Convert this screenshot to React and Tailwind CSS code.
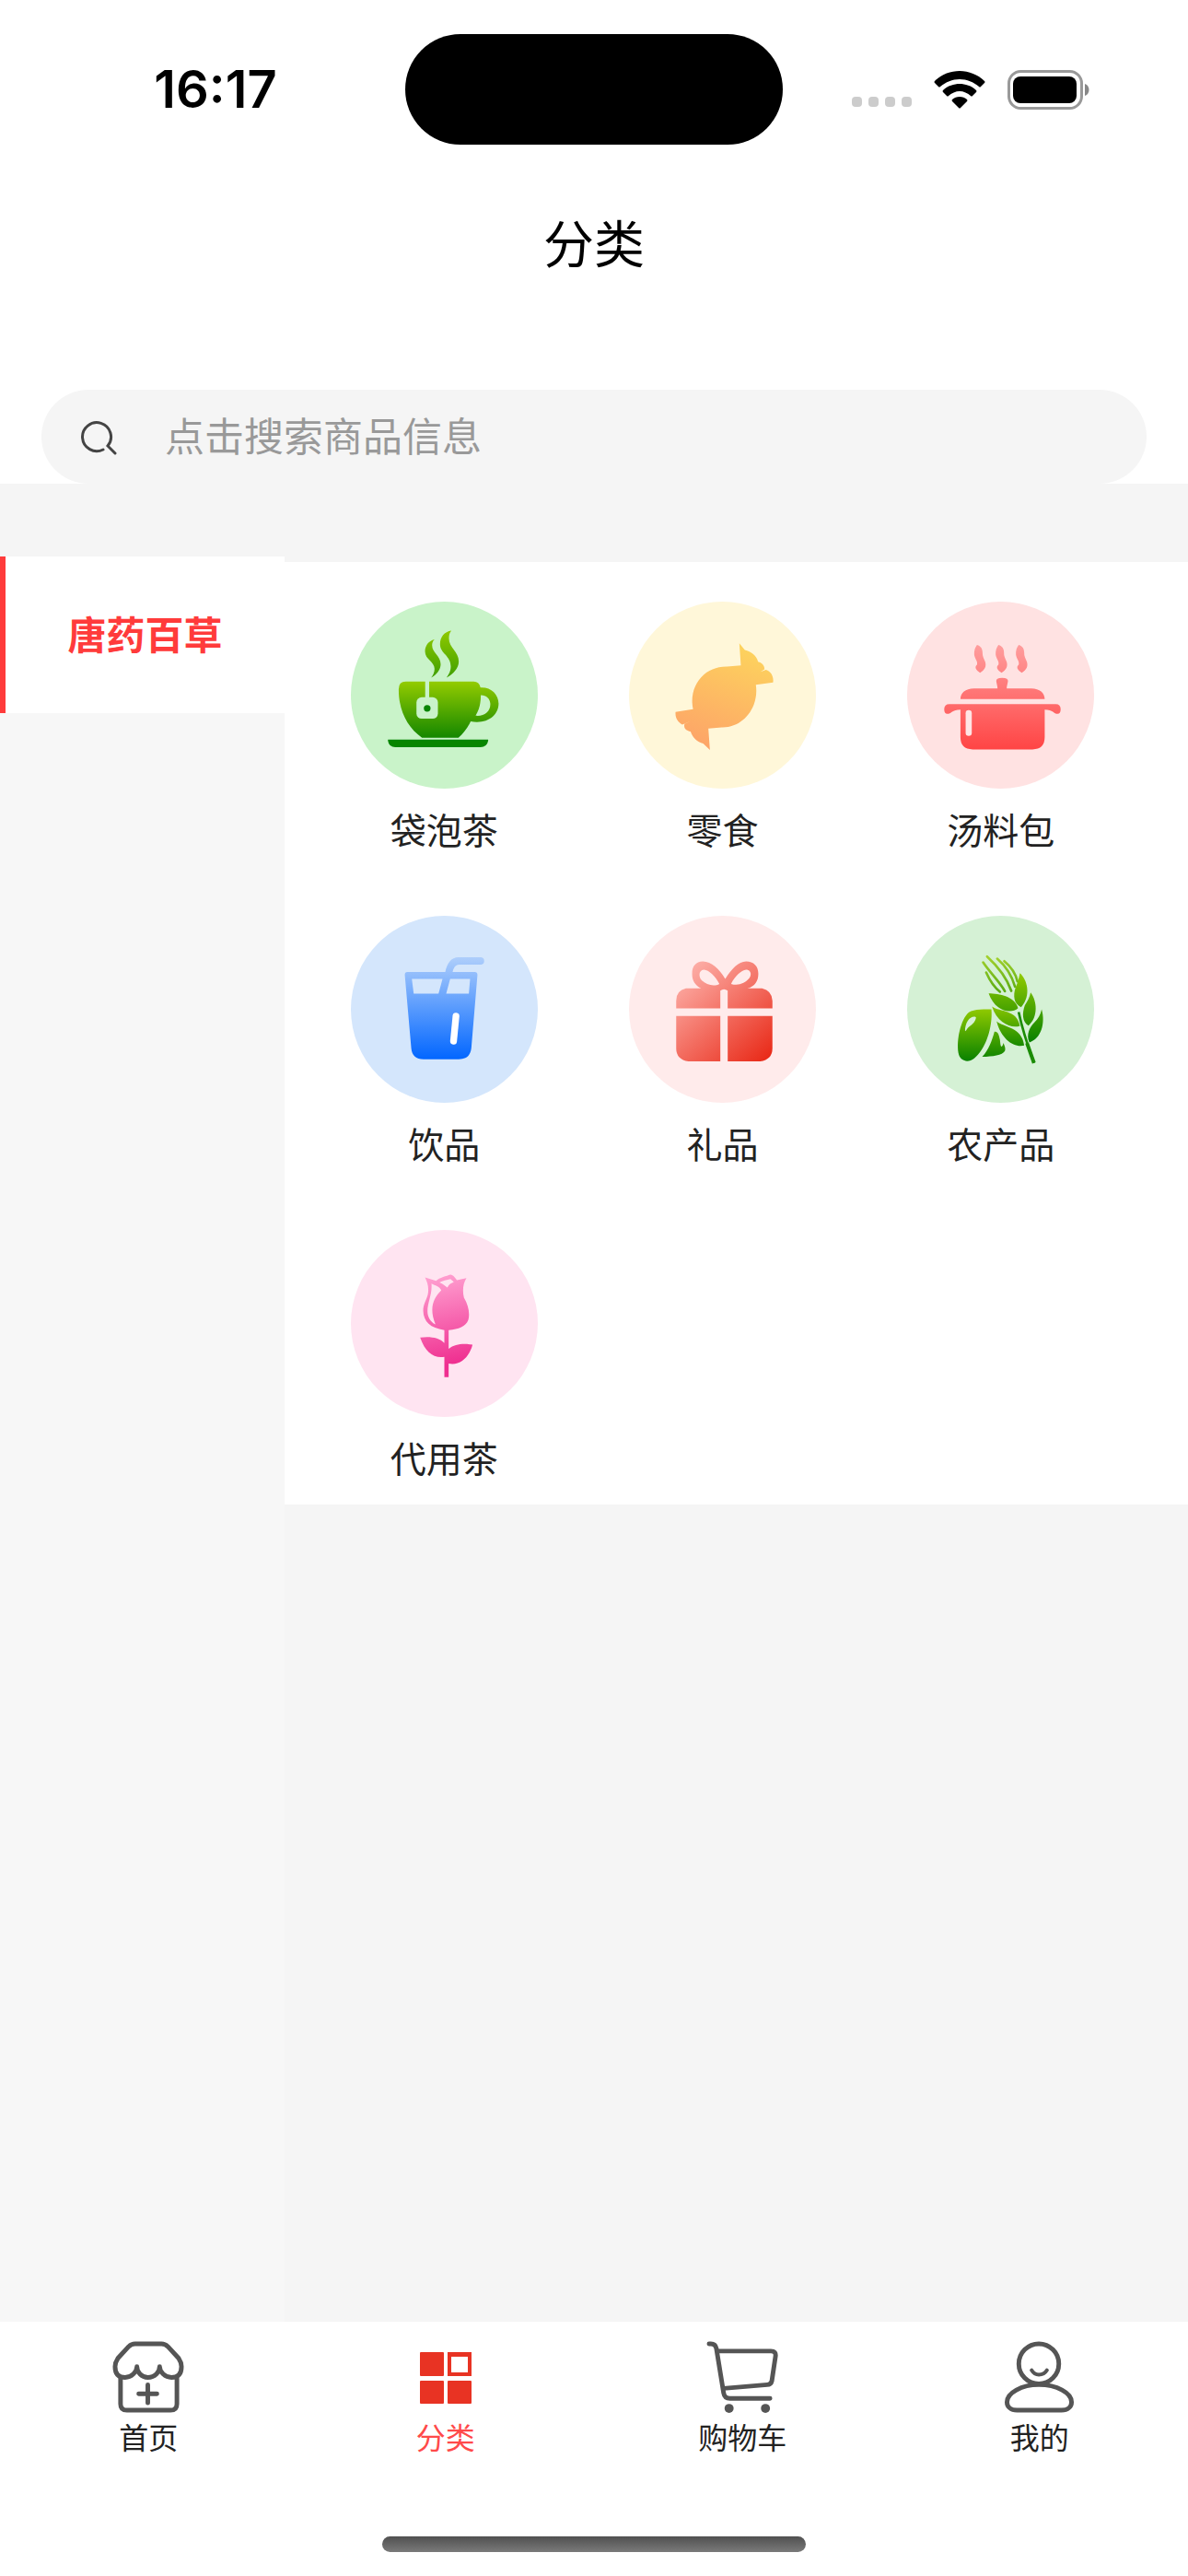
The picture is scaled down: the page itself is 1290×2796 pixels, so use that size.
import { useState } from "react";

function Grad({ id, from, to, x1 = 0, y1 = 0, x2 = 0, y2 = 1 }) {
  return (
    <linearGradient id={id} gradientUnits="userSpaceOnUse" x1={x1} y1={y1} x2={x2} y2={y2}>
      <stop offset="0" stopColor={from} />
      <stop offset="1" stopColor={to} />
    </linearGradient>
  );
}

function TeaIcon() {
  return (
    <svg viewBox="63 69 610 610" className="size-full" aria-hidden="true">
      <defs>
        <Grad id="tea-steam" from="#8fc900" to="#3f9f00" y1={165} y2={318} />
        <Grad id="tea-cup" from="#93cb00" to="#138600" y1={330} y2={515} />
      </defs>
      <path fill="url(#tea-steam)" d="M391 164C368 167 354 185 354 208C354 238 389 245 389 280C389 296 382 307 375 317C397 305 415 286 415 264C415 231 383 220 383 189C383 178 385 170 391 164Z" />
      <path fill="url(#tea-steam)" d="M336 192C316 197 305 213 305 231C305 258 336 264 336 288C336 299 331 309 325 317C343 307 356 290 356 273C356 246 328 236 328 211C328 203 331 197 336 192Z" />
      <path fill="url(#tea-cup)" fillRule="evenodd" d="M242 330H464Q481 330 486 349C520 347 545 371 545 402C545 441 507 470 454 460C443 482 430 499 414 513H295C247 478 219 425 219 355Q219 330 242 330ZM487 374C487 400 482 421 470 441C497 444 518 428 518 404C518 387 506 374 487 374Z" />
      <path stroke="#c9f3c9" strokeWidth="13" d="M312 326V386" />
      <rect x="277" y="381" width="70" height="70" rx="17" fill="#c9f3c9" />
      <circle cx="312" cy="417" r="11" fill="#078500" />
      <path fill="#078500" d="M184 519H511V523Q507 544 486 544H208Q187 544 184 523Z" />
    </svg>
  );
}

function CandyIcon() {
  return (
    <svg viewBox="69 69 610 610" className="size-full" aria-hidden="true">
      <defs>
        <Grad id="candy" from="#fdd45d" to="#fda468" x1={460} y1={210} x2={330} y2={550} />
      </defs>
      <path fill="url(#candy)" d="M429 205L447 227C467 231 486 246 490 265C503 268 512 278 511 290L498 298L516 291C533 296 542 314 539 333L483 340C494 413 442 481 372 479L328 483L333 553L311 532C292 528 277 513 270 493C254 489 247 482 250 468L270 459L243 470C228 462 219 448 221 429L278 420C262 343 316 279 389 281L434 277Z" />
    </svg>
  );
}

function PotIcon() {
  const steam = "M303 210C297 218 293 228 294 242C296 257 307 264 303 275C294 283 299 292 313 301C329 292 334 280 330 266C326 254 320 247 321 234C321 223 316 214 303 210Z";
  return (
    <svg viewBox="75 69 610 610" className="size-full" aria-hidden="true">
      <defs>
        <Grad id="pot" from="#ff9d9d" to="#ff4545" y1={210} y2={550} />
      </defs>
      <g fill="url(#pot)">
        <path d={steam} />
        <path d={steam} transform="translate(70 0)" />
        <path d={steam} transform="translate(136 0)" />
        <path d="M366 330Q364 318 385 318Q406 318 404 330C402 341 400 345 400 352H480C508 352 524 367 524 387H249C249 367 265 352 293 352H370C370 345 368 341 366 330Z" />
        <path d="M213 403H560Q576 403 576 420Q576 435 566 435C554 435 551 421 524 421V511Q524 551 484 551H289Q249 551 249 511V421C222 421 219 435 206 435Q196 435 196 420Q196 403 213 403Z" />
      </g>
      <path stroke="#ffe4e4" strokeWidth="20" strokeLinecap="round" d="M276 433V497" />
    </svg>
  );
}

function DrinkIcon() {
  return (
    <svg viewBox="63 73 610 610" className="size-full" aria-hidden="true">
      <defs>
        <Grad id="drink" from="#b0cffb" to="#0568ff" y1={205} y2={535} />
      </defs>
      <path fill="url(#drink)" fillRule="evenodd" d="M247 256H371C377 228 390 208 414 208H488Q498 210 498 220Q498 231 488 232H416C403 232 398 244 395 256H467Q476 256 476 266L456 505C453 530 439 541 415 541H300C276 541 262 529 260 505L239 266Q239 256 247 256ZM262 279L268 327H349L362 279ZM387 279L374 327H448L452 279Z" />
      <path stroke="#fff" strokeWidth="22" strokeLinecap="round" d="M406 400L398 482" />
    </svg>
  );
}

function GiftIcon() {
  return (
    <svg viewBox="69 73 610 610" className="size-full" aria-hidden="true">
      <defs>
        <Grad id="gift" from="#fdb0a9" to="#e92c1a" x1={245} y1={250} x2={510} y2={545} />
      </defs>
      <g fill="url(#gift)">
        <path fillRule="evenodd" d="M383 279C364 247 338 222 310 222C286 222 274 240 275 264C275 285 285 300 304 310H255Q223 317 223 350V375H367V317Q379 308 391 317V375H537V350Q535 317 503 310H455C480 303 491 285 491 262C491 238 476 222 451 222C427 222 402 248 383 279ZM314 249C329 250 350 269 364 295C346 305 316 298 302 278C294 261 303 249 314 249ZM451 249C466 249 470 264 462 276C448 294 424 302 402 295C415 270 435 251 451 249Z" />
        <path d="M223 400H367V548H263Q223 542 223 505Z" />
        <path d="M391 400H537V505Q537 542 497 548H391Z" />
      </g>
    </svg>
  );
}

function GrainIcon() {
  return (
    <svg viewBox="75 73 610 610" className="size-full" aria-hidden="true">
      <defs>
        <Grad id="bean" from="#8fc900" to="#0a8200" y1={378} y2={545} />
        <Grad id="ear" from="#8fc900" to="#0a8200" y1={265} y2={480} />
        <Grad id="awn" from="#a3d12d" to="#59ab12" y1={205} y2={322} />
        <Grad id="leaf" from="#86c400" to="#1a8b00" y1={370} y2={495} />
      </defs>
      <path fill="url(#bean)" d="M350 378C355 438 330 510 294 538C275 553 251 548 244 527C234 489 247 421 271 393C284 378 315 378 350 378Z" />
      <path fill="#d6f1d6" d="M297 402C280 399 264 420 264 449C269 448 270 440 278 434C291 426 298 416 300 405Z" />
      <path fill="url(#bean)" d="M360 451C371 449 375 461 378 478C379 488 380 498 382 500C387 500 388 493 389 488C394 498 397 508 394 514C386 528 354 532 320 533C341 511 352 480 360 451Z" />
      <g fill="none" stroke="url(#awn)" strokeWidth="8" strokeLinecap="round">
        <path d="M333 258C345 285 360 307 378 321" />
        <path d="M323 225C345 258 377 288 394 319" />
        <path d="M336 206C370 237 401 278 415 318" />
        <path d="M369 213C397 237 417 270 427 304" />
        <path d="M392 221C414 239 429 262 435 287" />
      </g>
      <g fill="url(#ear)">
        <path d="M443 260C466 279 482 333 447 371C423 361 420 333 429 307C436 291 440 276 443 260Z" />
        <path d="M478 323C499 350 504 403 471 431C450 418 450 391 459 365C468 350 475 340 478 323Z" />
        <path d="M514 378C527 424 512 474 474 486C462 461 476 434 491 420C503 408 510 396 514 378Z" />
        <path d="M341 326C376 326 427 337 437 374C415 394 363 387 341 326Z" />
      </g>
      <g fill="url(#leaf)">
        <path d="M352 369C378 388 432 377 443 432C416 442 369 423 352 369Z" />
        <path d="M367 417C390 437 450 435 457 496C424 504 382 476 367 417Z" />
      </g>
      <path fill="none" stroke="#1c8c06" strokeWidth="8" d="M439 387C448 430 466 490 489 553" />
      <path stroke="#1c8c06" strokeWidth="12" d="M466 488L489 553" />
    </svg>
  );
}

function RoseIcon() {
  return (
    <svg viewBox="63 77 610 610" className="size-full" aria-hidden="true">
      <defs>
        <Grad id="rose" from="#ff9fd0" to="#ef2f90" x1={350} y1={225} x2={410} y2={510} />
      </defs>
      <path fill="url(#rose)" fillRule="evenodd" d="M305 232L341 243C352 232 376 228 387 223Q395 220 409 241L440 234C428 254 427 276 432 298C447 323 452 351 446 371C438 392 415 401 382 404V465C402 449 427 447 460 451C449 493 418 521 382 513V557H368V491C332 496 306 476 289 428C318 423 352 427 368 446V404C322 397 300 376 299 341C299 318 308 310 314 288C319 264 312 247 305 232ZM326 252C329 287 313 312 313 342C313 361 323 377 339 385C318 334 331 300 358 274C352 260 338 259 326 252ZM352 248C364 252 371 260 378 265C382 255 391 250 399 247L388 237C376 240 362 242 352 248Z" />
    </svg>
  );
}

function HomeIcon() {
  return (
    <svg viewBox="0 0 79 79" className="size-[78px]" fill="none" stroke="#555" strokeWidth="5" strokeLinecap="round" strokeLinejoin="round" aria-hidden="true">
      <path d="M3 28C3 24 4 22 6 19L18 6Q21 3 25 3H54Q58 3 61 6L73 19C75 22 76 24 76 28C76 36 72 40 65 40C58 40 52 34 52 28C52 34 47 40 39 40C32 40 27 34 27 28C27 34 21 40 14 40C7 40 3 36 3 28Z" />
      <path d="M9 41V69Q9 76 16 76H64Q71 76 71 69V41M39 48V68M29 58H49" />
    </svg>
  );
}

function GridIcon() {
  return (
    <svg viewBox="0 0 78 78" className="size-[78px]" fill="#e83323" aria-hidden="true">
      <rect x="11" y="12" width="26" height="26" rx="1" />
      <path fillRule="evenodd" d="M41 12H67V38H41ZM45 17V34H63V17Z" />
      <rect x="11" y="43" width="26" height="25" rx="1" />
      <rect x="41" y="43" width="26" height="25" rx="1" />
    </svg>
  );
}

function CartIcon() {
  return (
    <svg viewBox="0 0 79 79" className="size-[78px]" fill="none" stroke="#555" strokeWidth="5" strokeLinecap="round" strokeLinejoin="round" aria-hidden="true">
      <path d="M3 3H5Q10 3 11 8L19 57Q20 63 26 63H70" />
      <path d="M12 11H71Q77 11 76 17L72 44Q71 48 67 48L19 52" />
      <circle cx="25" cy="74" r="5" fill="#555" stroke="none" />
      <circle cx="65" cy="74" r="5" fill="#555" stroke="none" />
    </svg>
  );
}

function UserIcon() {
  return (
    <svg viewBox="0 0 78 79" className="size-[78px]" fill="none" stroke="#555" strokeWidth="5" strokeLinecap="round" strokeLinejoin="round" aria-hidden="true">
      <circle cx="38" cy="25" r="22" />
      <path strokeWidth="4" d="M30 32Q33 37 38 37Q44 37 47 32" />
      <path d="M14 76H63C70 76 74 72 74 67C74 57 58 48 38 48C19 48 3 57 3 67C3 72 7 76 14 76Z" />
    </svg>
  );
}

const categories = [
  { name: "袋泡茶", bg: "bg-[#c9f3c9]", Icon: TeaIcon },
  { name: "零食", bg: "bg-[#fff7d9]", Icon: CandyIcon },
  { name: "汤料包", bg: "bg-[#ffe2e2]", Icon: PotIcon },
  { name: "饮品", bg: "bg-[#d4e6fc]", Icon: DrinkIcon },
  { name: "礼品", bg: "bg-[#ffebeb]", Icon: GiftIcon },
  { name: "农产品", bg: "bg-[#d5f1d5]", Icon: GrainIcon },
  { name: "代用茶", bg: "bg-[#ffe4f1]", Icon: RoseIcon },
];

const tabs = [
  { name: "首页", Icon: HomeIcon },
  { name: "分类", Icon: GridIcon },
  { name: "购物车", Icon: CartIcon },
  { name: "我的", Icon: UserIcon },
];

function StatusBar() {
  return (
    <div className="grid h-[177px] grid-cols-[1fr_410px_1fr] items-start pt-[37px]">
      <div className="flex h-[120px] items-center justify-center pl-7">
        <span className="font-['Inter'] text-[56px] leading-none font-semibold text-black">16:17</span>
      </div>
      <div className="h-[120px] rounded-full bg-black" />
      <div className="flex h-[120px] items-center gap-6 pl-[75px]">
        <div className="flex gap-[7px] pt-[27px]">
          <span className="size-[11px] rounded-[4px] bg-[#cccccc]" />
          <span className="size-[11px] rounded-[4px] bg-[#cccccc]" />
          <span className="size-[11px] rounded-[4px] bg-[#cccccc]" />
          <span className="size-[11px] rounded-[4px] bg-[#cccccc]" />
        </div>
        <svg viewBox="0 0 56 41" className="h-[41px] w-[56px]" aria-hidden="true">
          <path d="M28 0C38 0 48 4 55 11Q56 12 55 13L51 17Q50 18 49 17C43 12 36 9 28 9C20 9 13 12 7 17Q6 18 5 17L1 13Q0 12 1 11C8 4 18 0 28 0Z" />
          <path d="M28 14C34 14 41 16 46 21Q47 22 46 23L42 27Q41 28 40 27C37 24 32 22 28 22C24 22 19 24 16 27Q15 28 14 27L10 23Q9 22 10 21C15 16 22 14 28 14Z" />
          <path d="M28 28C31 28 34 29 36 31Q37 32 36 33L29 40Q28 41 27 40L20 33Q19 32 20 31C22 29 25 28 28 28Z" />
        </svg>
        <svg viewBox="0 0 90 43" className="h-[43px] w-[90px]" aria-hidden="true">
          <rect x="1.500" y="1.500" width="79" height="40" rx="13" fill="none" stroke="#999" strokeWidth="3" />
          <rect x="6" y="7" width="69" height="29" rx="8" />
          <path d="M84 15C90 17 90 26 84 28Z" fill="#888" />
        </svg>
      </div>
    </div>
  );
}

export default function App() {
  const [tab, setTab] = useState("分类");
  return (
    <div className="flex min-h-screen flex-col bg-[#f5f5f5] font-['Noto_Sans_CJK_SC',sans-serif] text-[#222222]">
      <header className="bg-white">
        <StatusBar />
        <h1 className="pt-[44px] text-center text-[55px] leading-[80px] text-black">分类</h1>
        <div className="px-[45px] pt-[122px]">
          <div className="flex h-[102px] items-center rounded-full bg-[#f5f5f5] pr-11 pl-[43px]">
            <svg viewBox="0 0 40 40" className="size-[40px] shrink-0" fill="none" stroke="#444" strokeWidth="3" strokeLinecap="round" aria-hidden="true">
              <path d="M24 34A15.500 15.500 0 1 1 29 30L37 38" />
            </svg>
            <input type="search" aria-label="搜索" placeholder="点击搜索商品信息" className="ml-[51px] min-w-0 flex-1 bg-transparent pb-1.5 text-[43px] leading-[60px] outline-none placeholder:text-[#999999]" />
          </div>
        </div>
      </header>

      <main className="flex flex-1 pt-[79px]">
        <nav className="w-[309px] shrink-0 bg-[#f7f7f7]">
          <button type="button" className="block h-[170px] w-full border-l-[6px] border-[#ff3b3b] bg-white pb-1 text-center text-[42px] leading-[60px] font-bold text-[#ff3b3b]">
            唐药百草
          </button>
        </nav>
        <section className="flex-1 pt-[6px]">
          <ul className="grid grid-cols-3 bg-white pr-[52px] pl-[22px]">
            {categories.map(({ name, bg, Icon }) => (
              <li key={name}>
                <a href="#" className="flex flex-col items-center pt-[43px] pb-6">
                  <span className={`size-[203px] overflow-hidden rounded-full ${bg}`}>
                    <Icon />
                  </span>
                  <span className="mt-[15px] text-[39px] leading-[56px]">{name}</span>
                </a>
              </li>
            ))}
          </ul>
        </section>
      </main>

      <footer className="bg-white pt-[21px]">
        <nav className="grid grid-cols-4">
          {tabs.map(({ name, Icon }) => (
            <button key={name} type="button" onClick={() => setTab(name)} className="flex flex-col items-center gap-[3px]">
              <Icon />
              <span className={tab === name ? "text-[32px] leading-[44px] text-[#ff4a4a]" : "text-[32px] leading-[44px]"}>{name}</span>
            </button>
          ))}
        </nav>
        <div className="flex justify-center pt-[87px] pb-[26px]">
          <div className="h-[17px] w-[460px] rounded-full bg-linear-to-b from-[#505050] to-[#7a7a7a]" />
        </div>
      </footer>
    </div>
  );
}
